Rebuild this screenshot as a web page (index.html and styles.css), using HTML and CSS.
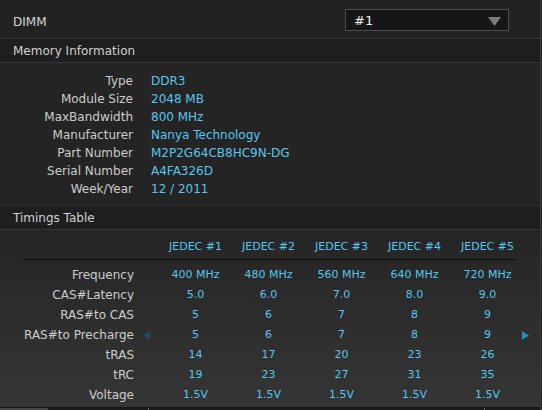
FILE: index.html
```html
<!DOCTYPE html>
<html>
<head>
<meta charset="utf-8">
<link rel="stylesheet" href="styles.css">
</head>
<body>
<div class="app">
  <div class="dimm-row">
    <span class="label-plain">DIMM</span>
    <div class="select">
      <span class="select-value">#1</span>
      <svg class="select-arrow" width="13" height="9" viewBox="0 0 13 9"><polygon points="0,0 13,0 6.5,9" fill="#7a7a7a"/></svg>
    </div>
  </div>
  <div class="section-head">Memory Information</div>
  <div class="info">
    <div class="info-row"><span class="k">Type</span><span class="v">DDR3</span></div>
    <div class="info-row"><span class="k">Module Size</span><span class="v">2048 MB</span></div>
    <div class="info-row"><span class="k">MaxBandwidth</span><span class="v">800 MHz</span></div>
    <div class="info-row"><span class="k">Manufacturer</span><span class="v">Nanya Technology</span></div>
    <div class="info-row"><span class="k">Part Number</span><span class="v">M2P2G64CB8HC9N-DG</span></div>
    <div class="info-row"><span class="k">Serial Number</span><span class="v">A4FA326D</span></div>
    <div class="info-row"><span class="k">Week/Year</span><span class="v">12 / 2011</span></div>
  </div>
  <div class="section-head">Timings Table</div>
  <div class="timings">
    <div class="t-head">
      <span></span>
      <span class="c">JEDEC #1</span><span class="c">JEDEC #2</span><span class="c">JEDEC #3</span><span class="c">JEDEC #4</span><span class="c">JEDEC #5</span>
    </div>
    <div class="t-body">
      <div class="t-row"><span class="k">Frequency</span><span class="c">400 MHz</span><span class="c">480 MHz</span><span class="c">560 MHz</span><span class="c">640 MHz</span><span class="c">720 MHz</span></div>
      <div class="t-row"><span class="k">CAS#Latency</span><span class="c">5.0</span><span class="c">6.0</span><span class="c">7.0</span><span class="c">8.0</span><span class="c">9.0</span></div>
      <div class="t-row"><span class="k">RAS#to CAS</span><span class="c">5</span><span class="c">6</span><span class="c">7</span><span class="c">8</span><span class="c">9</span></div>
      <div class="t-row"><span class="k">RAS#to Precharge</span><span class="c">5</span><span class="c">6</span><span class="c">7</span><span class="c">8</span><span class="c">9</span></div>
      <div class="t-row"><span class="k">tRAS</span><span class="c">14</span><span class="c">17</span><span class="c">20</span><span class="c">23</span><span class="c">26</span></div>
      <div class="t-row"><span class="k">tRC</span><span class="c">19</span><span class="c">23</span><span class="c">27</span><span class="c">31</span><span class="c">35</span></div>
      <div class="t-row"><span class="k">Voltage</span><span class="c">1.5V</span><span class="c">1.5V</span><span class="c">1.5V</span><span class="c">1.5V</span><span class="c">1.5V</span></div>
    </div>
    <svg class="nav nav-left" width="7" height="9" viewBox="0 0 7 9"><polygon points="7,0 7,9 0,4.5" fill="#1f4d5e"/></svg>
    <svg class="nav nav-right" width="7" height="9" viewBox="0 0 7 9"><polygon points="0,0 0,9 7,4.5" fill="#1b91c2"/></svg>
  </div>
  <div class="bottom-bar"><div class="bb-a"></div><div class="bb-b"></div><div class="bb-c"></div><div class="bb-d"></div></div>
</div>
</body>
</html>
```

FILE: styles.css
```css
html, body {
  margin: 0;
  padding: 0;
  background: #222222;
  overflow: hidden;
}
body {
  width: 542px;
  height: 410px;
  font-family: "DejaVu Sans", Verdana, sans-serif;
  font-size: 12px;
  color: #cfcfcf;
}
.app {
  width: 540px;
  height: 410px;
  border-right: 1px solid #3a3a3a;
  display: flex;
  flex-direction: column;
  background: #222222;
}
.dimm-row {
  height: 39px;
  flex: none;
  box-sizing: border-box;
  display: flex;
  align-items: center;
  padding: 2px 31px 0 13px;
  border-bottom: 1px solid #363636;
  background: #222222;
}
.label-plain {
  color: #d4d4d4;
  margin-top: 3px;
}
.select {
  margin-left: auto;
  width: 164px;
  height: 22px;
  box-sizing: border-box;
  border: 1px solid #4c4c4c;
  background: #161616;
  display: flex;
  align-items: center;
  padding: 0 7px 0 8px;
}
.select-value {
  color: #f2f2f2;
  font-size: 13px;
}
.select-arrow {
  margin-left: auto;
  margin-top: 2px;
}
.section-head {
  height: 24px;
  flex: none;
  box-sizing: border-box;
  line-height: 23px;
  padding-left: 13px;
  padding-top: 1px;
  background: #1e1e1e;
  border-bottom: 1px solid #363636;
  color: #d0d0d0;
}
.info {
  flex: none;
  padding: 9px 0 7px 0;
  background: #242424;
  border-bottom: 1px solid #303030;
}
.info-row {
  height: 18px;
  line-height: 18px;
  display: flex;
}
.info-row .k {
  width: 133px;
  text-align: right;
  color: #cccccc;
}
.info-row .v {
  padding-left: 18px;
  color: #58c6ee;
}
.timings {
  position: relative;
  flex: 1;
  background: linear-gradient(#252525, #353535);
  padding-top: 7px;
  border-bottom: 1px solid #161616;
}
.t-head {
  display: grid;
  grid-template-columns: 159px repeat(5, 73px);
  height: 20px;
  line-height: 20px;
  font-size: 11px;
  color: #58c6ee;
}
.t-body {
  margin: 2px 23px 0 23px;
  border-top: 1px solid #0d0d0d;
  padding-top: 5px;
}
.t-row {
  display: grid;
  grid-template-columns: 111px 25px repeat(5, 73px);
  height: 20px;
  line-height: 20px;
  margin-left: -23px;
  padding-left: 23px;
}
.t-row .k {
  grid-column: 1;
  text-align: right;
  color: #cccccc;
  white-space: nowrap;
}
.t-row .c:nth-child(2) { grid-column: 3; }
.c {
  text-align: center;
  font-size: 11px;
  color: #58c6ee;
}
.t-head .c:nth-child(2) { grid-column: 2; }
.nav {
  position: absolute;
  top: 101px;
}
.nav-left { left: 143px; }
.nav-right { left: 522px; }
.bottom-bar {
  height: 2px;
  flex: none;
  display: flex;
}
.bb-a { width: 48px; background: #474747; }
.bb-b { width: 100px; background: #1a1a1a; border-right: 1px solid #6a6a6a; }
.bb-c { width: 335px; background: #1a1a1a; border-right: 1px solid #6a6a6a; }
.bb-d { flex: 1; background: #1a1a1a; }
```
